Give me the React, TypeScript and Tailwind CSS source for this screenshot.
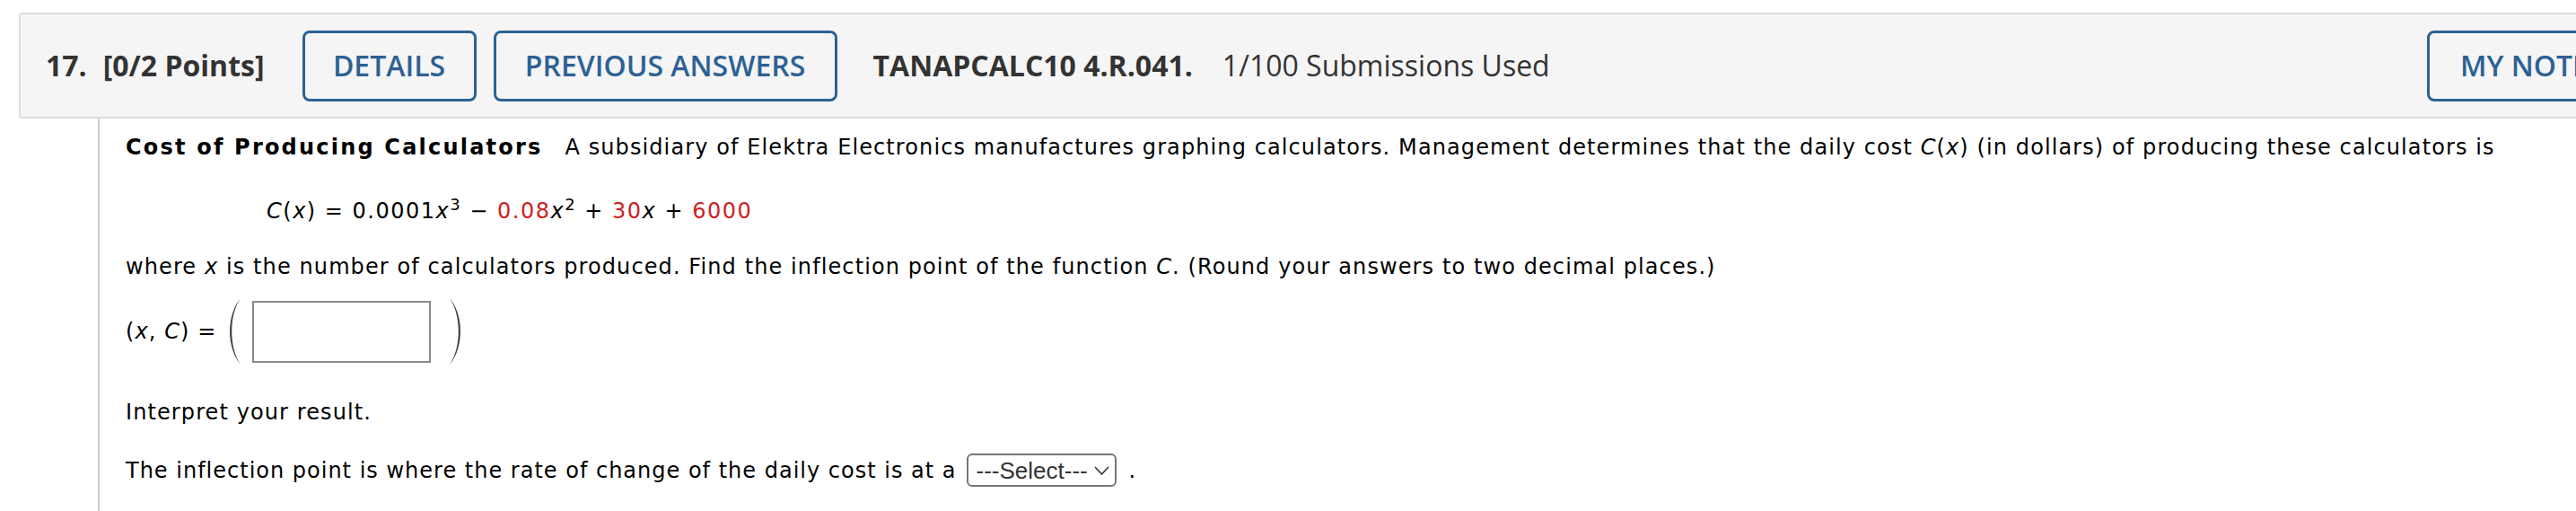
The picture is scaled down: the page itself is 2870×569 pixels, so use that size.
const header = "font-['Open_Sans',sans-serif] text-[32px] text-[#333333]";
const body = "font-['DejaVu_Sans',Verdana,sans-serif] text-[24px] leading-[36px] text-black tracking-[1.1px]";

function OutlineButton({ label, width }: { label: string; width: string }) {
  return (
    <button
      className={`${width} h-[79px] shrink-0 flex items-center justify-center rounded-[8px] border-[3px] border-[#2d6194] bg-transparent font-semibold text-[#2d6194]`}
    >
      {label}
    </button>
  );
}

function Paren({ side }: { side: "left" | "right" }) {
  const d =
    side === "left"
      ? "M14,1 C-2,20 -2,56 14,75 C1,56 1,20 14,1 Z"
      : "M2,1 C18,20 18,56 2,75 C15,56 15,20 2,1 Z";
  return (
    <svg width="16" height="76" viewBox="0 0 16 76" className="shrink-0">
      <path d={d} fill="#444444" />
    </svg>
  );
}

export default function App() {
  return (
    <div className="w-full min-h-[569px] bg-white overflow-hidden">
      {/* question header */}
      <div
        className={`${header} mt-[14px] ml-[21px] w-[2953px] h-[118px] flex items-center rounded-[4px] border-2 border-[#dddddd] bg-[#f5f5f5] pl-[28px] pr-[28px]`}
      >
        <span className="font-bold">17.</span>
        <span className="font-bold ml-[18px]">[0/2 Points]</span>
        <div className="ml-[42px] flex gap-[19px]">
          <OutlineButton label="DETAILS" width="w-[194px]" />
          <OutlineButton label="PREVIOUS ANSWERS" width="w-[383px]" />
        </div>
        <span className="ml-[40px] font-bold">TANAPCALC10 4.R.041.</span>
        <span className="ml-[33px]">1/100 Submissions Used</span>
        <button className="ml-auto w-[240px] h-[79px] shrink-0 flex items-center pl-[34px] rounded-[8px] border-[3px] border-[#2d6194] font-semibold text-[#2d6194] whitespace-nowrap">
          MY NOTES
        </button>
      </div>

      {/* question body */}
      <div className={`${body} ml-[109px] border-l-2 border-[#cccccc] pl-[29px] pt-[14px] pb-[27px]`}>
        <p className="whitespace-nowrap">
          <span className="font-bold tracking-[2.2px]">Cost of Producing Calculators</span>
          <span className="ml-[25px]">
            A subsidiary of Elektra Electronics manufactures graphing calculators. Management determines that the daily
            cost <i>C</i>(<i>x</i>) (in dollars) of producing these calculators is
          </span>
        </p>

        <p className="mt-[35px] ml-[157px] whitespace-nowrap tracking-[1.5px]">
          <i>C</i>(<i>x</i>) = 0.0001<i>x</i>
          <sup className="text-[18px] top-[-9px]">3</sup> − <span className="text-[#cc2222]">0.08</span>
          <i>x</i>
          <sup className="text-[18px] top-[-9px]">2</sup> + <span className="text-[#cc2222]">30</span>
          <i>x</i> + <span className="text-[#cc2222]">6000</span>
        </p>

        <p className="mt-[26px] whitespace-nowrap">
          where <i>x</i> is the number of calculators produced. Find the inflection point of the function <i>C</i>.
          (Round your answers to two decimal places.)
        </p>

        <div className="mt-[16px] h-[76px] flex items-center">
          <span className="whitespace-nowrap">
            (<i>x</i>, <i>C</i>) =
          </span>
          <div className="ml-[12px]">
            <Paren side="left" />
          </div>
          <input
            type="text"
            className="ml-[11px] w-[199px] h-[69px] border-2 border-[#8a8a8a] bg-white outline-none"
          />
          <div className="ml-[19px]">
            <Paren side="right" />
          </div>
        </div>

        <p className="mt-[34px]">Interpret your result.</p>

        <div className="mt-[28px] h-[37px] flex items-center whitespace-nowrap tracking-[1px]">
          <span>The inflection point is where the rate of change of the daily cost is at a</span>
          <div className="ml-[12px] w-[167px] h-[37px] shrink-0 flex items-center rounded-[6px] border-2 border-[#767676] bg-white pl-[8px] pr-[6px] font-['Liberation_Sans',Arial,sans-serif] text-[26px] tracking-normal text-[#333333]">
            <span>---Select---</span>
            <svg width="17" height="10" viewBox="0 0 17 10" className="ml-auto">
              <path d="M1,1 L8.5,9 L16,1" fill="none" stroke="#333333" strokeWidth="1.6" />
            </svg>
          </div>
          <span className="ml-[13px]">.</span>
        </div>
      </div>
    </div>
  );
}
